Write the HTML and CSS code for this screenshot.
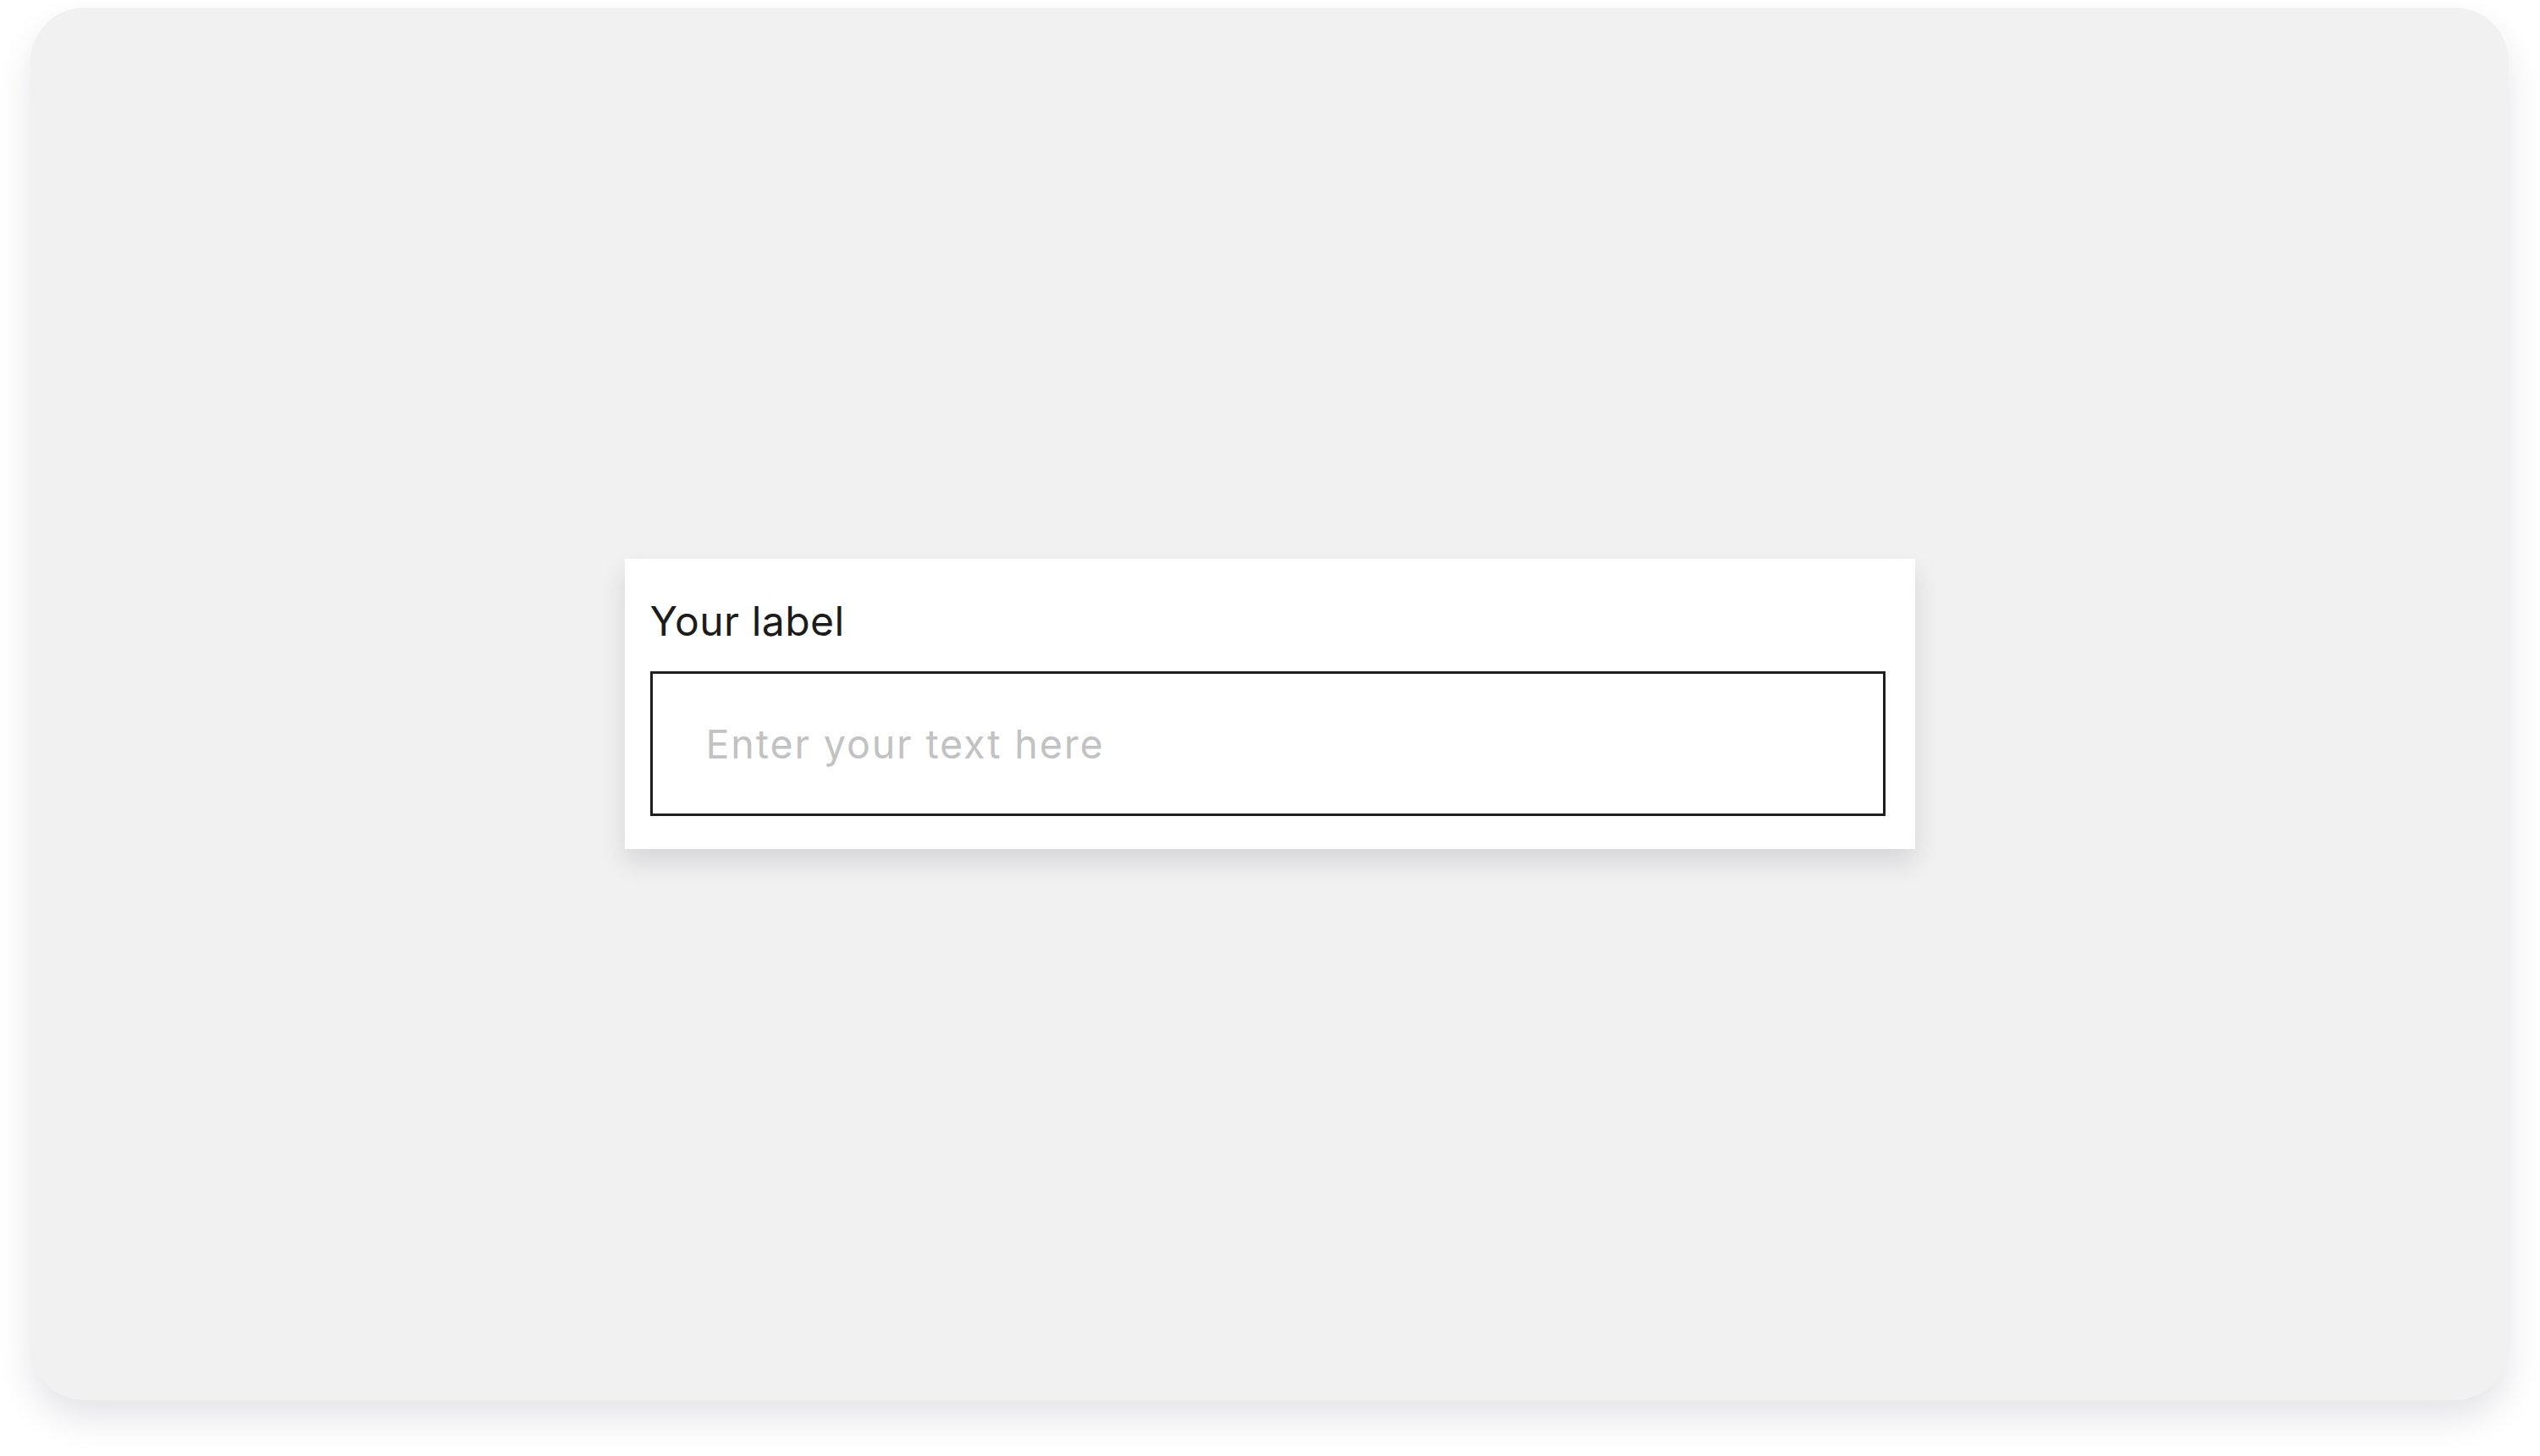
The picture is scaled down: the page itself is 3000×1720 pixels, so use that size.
FILE: index.html
```html
<!DOCTYPE html>
<html lang="en">
<head>
<meta charset="utf-8">
<title>Text field</title>
<link rel="stylesheet" href="styles.css">
</head>
<body>
<main class="stage">
  <div class="field-card">
    <label class="field-label" for="field">Your label</label>
    <input class="field-input" id="field" type="text" placeholder="Enter your text here">
  </div>
</main>
</body>
</html>
```
FILE: styles.css
```css
html, body {
  margin: 0;
  background: #ffffff;
}
body {
  width: 3000px;
  height: 1720px;
  box-sizing: border-box;
  padding: 9px 37px 66px 36px;
  font-family: Inter, "Liberation Sans", sans-serif;
}
.stage {
  height: 1645px;
  background: #f1f1f1;
  border-radius: 64px;
  box-shadow: 0 22px 40px rgba(40, 40, 70, 0.12);
  display: flex;
  align-items: center;
  justify-content: center;
}
.field-card {
  width: 1524px;
  height: 343px;
  box-sizing: border-box;
  background: #ffffff;
  padding: 45px 35px 39px 30px;
  display: flex;
  flex-direction: column;
  box-shadow: 0 16px 28px rgba(40, 40, 70, 0.13);
}
.field-label {
  font-size: 48px;
  line-height: 58px;
  letter-spacing: 0.5px;
  color: #1c1c1c;
  margin-bottom: 30px;
}
.field-input {
  height: 171px;
  box-sizing: border-box;
  border: 3px solid #1f1f1f;
  border-radius: 0;
  padding: 0 0 0 63px;
  margin: 0;
  font-family: Inter, "Liberation Sans", sans-serif;
  font-size: 46.5px;
  letter-spacing: 1.9px;
  color: #1c1c1c;
  background: #ffffff;
  outline: none;
}
.field-input::placeholder {
  color: #c2c2c2;
}
```
